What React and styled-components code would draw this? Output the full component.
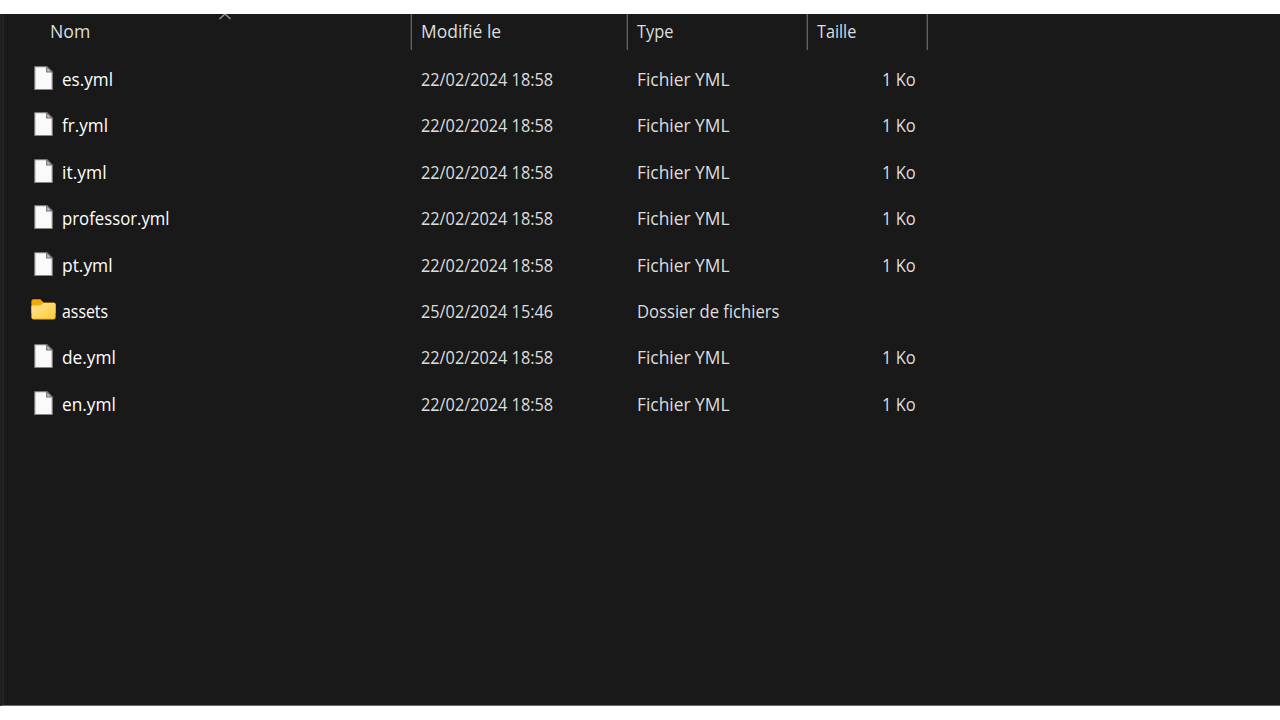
import React from 'react';
import styled, { createGlobalStyle } from 'styled-components';

const GlobalStyle = createGlobalStyle`
  * { box-sizing: border-box; }
  body { margin: 0; background: #fff; overflow: hidden; }
`;

const Page = styled.main`
  width: 1280px;
  height: 720px;
  padding: 14px 0;
  background: #fff;
`;

const Explorer = styled.section`
  position: relative;
  height: 692px;
  background: #191919;
  border-left: 3px solid #202020;
  border-bottom: 1px solid #6b696a;
  box-shadow: inset 1px 0 #272727;
  font-family: 'Open Sans', 'Noto Sans', sans-serif;
  font-size: 18px;
  line-height: 24px;
  color: #dedede;
  white-space: nowrap;
`;

const Columns = styled.div`
  display: grid;
  grid-template-columns: 409px 216px 180px 120px;
`;

const Header = styled(Columns)`
  height: 36px;
`;

const HeaderCell = styled.div`
  position: relative;
  padding: 5px 0 0 ${(p) => p.$indent || 9}px;
  border-right: 1px solid #636363;
  box-shadow: inset -1px 0 #303030;
`;

const SortArrow = styled.svg`
  position: absolute;
  left: 215px;
  top: 0;
`;

const Rows = styled.div`
  padding-top: 5.7px;
`;

const Row = styled(Columns)`
  height: 46.43px;
  align-items: center;
`;

const NameCell = styled.div`
  display: flex;
  align-items: center;
  padding-left: 28px;
  color: #fff;
`;

const IconBox = styled.span`
  display: flex;
  width: 31px;
  height: 26px;
`;

const Cell = styled.div`
  padding-left: 9px;
`;

const SizeCell = styled.div`
  display: flex;
  justify-content: flex-end;
  padding-right: 12px;
`;

const Label = styled.span`
  display: inline-block;
  transform: scaleX(${(p) => p.$stretch || 1});
  transform-origin: ${(p) => (p.$end ? 'right' : 'left')};
`;

const FileIcon = () => (
  <svg width="26" height="26" viewBox="0 0 26 26">
    <path d="M3.8 .7H16L21.2 5.9V23.5H3.8Z" fill="#fafafa" stroke="#858585" strokeWidth="1.1" />
    <path d="M15.7 .7V6H21.2Z" fill="#c4c4c4" stroke="#6e6e6e" strokeWidth="1.1" />
  </svg>
);

const FolderIcon = () => (
  <svg width="26" height="26" viewBox="0 0 26 26">
    <defs>
      <linearGradient id="folder" x1="0" y1="0" x2="1" y2="1">
        <stop offset="0" stopColor="#ffe596" />
        <stop offset="1" stopColor="#ffc937" />
      </linearGradient>
    </defs>
    <path d="M.4 3.2Q.4 1.3 2.3 1.3H9.3L12.5 4.4H22.6Q24.6 4.4 24.6 6.4V15H.4Z" fill="#f2aa0b" />
    <path d="M.4 8.6Q.4 7.4 2 7.4H9.5L12.5 5H22.9Q24.6 5 24.6 6.7V19.3Q24.6 21.3 22.6 21.3H2.4Q.4 21.3 .4 19.3Z" fill="url(#folder)" />
    <path d="M.9 20Q1.3 21 2.6 21H22.4Q23.7 21 24.1 20" fill="none" stroke="#e3a31c" strokeWidth=".7" />
  </svg>
);

const files = [
  { name: 'es.yml', stretch: 0.95, date: '22/02/2024 18:58' },
  { name: 'fr.yml', stretch: 0.95, date: '22/02/2024 18:58' },
  { name: 'it.yml', stretch: 0.97, date: '22/02/2024 18:58' },
  { name: 'professor.yml', stretch: 0.93, date: '22/02/2024 18:58' },
  { name: 'pt.yml', stretch: 0.965, date: '22/02/2024 18:58' },
  { name: 'assets', stretch: 0.882, date: '25/02/2024 15:46', folder: true },
  { name: 'de.yml', stretch: 0.96, date: '22/02/2024 18:58' },
  { name: 'en.yml', stretch: 0.96, date: '22/02/2024 18:58' },
];

export default function App() {
  return (
    <Page>
      <GlobalStyle />
      <Explorer>
        <Header>
          <HeaderCell $indent={46.5}>
            <Label $stretch={0.98}>Nom</Label>
            <SortArrow width="14" height="6" viewBox="0 0 14 6">
              <path d="M1.5 5L7 0L12.5 5" fill="none" stroke="#9a9a9a" strokeWidth="1.4" />
            </SortArrow>
          </HeaderCell>
          <HeaderCell><Label $stretch={0.97}>Modifié le</Label></HeaderCell>
          <HeaderCell><Label $stretch={0.91}>Type</Label></HeaderCell>
          <HeaderCell><Label $stretch={0.9}>Taille</Label></HeaderCell>
        </Header>
        <Rows>
          {files.map((f) => (
            <Row key={f.name}>
              <NameCell>
                <IconBox>{f.folder ? <FolderIcon /> : <FileIcon />}</IconBox>
                <Label $stretch={f.stretch}>{f.name}</Label>
              </NameCell>
              <Cell><Label $stretch={0.904}>{f.date}</Label></Cell>
              <Cell>
                <Label $stretch={f.folder ? 0.923 : 0.965}>
                  {f.folder ? 'Dossier de fichiers' : 'Fichier YML'}
                </Label>
              </Cell>
              <SizeCell>{!f.folder && <Label $end $stretch={0.92}>1 Ko</Label>}</SizeCell>
            </Row>
          ))}
        </Rows>
      </Explorer>
    </Page>
  );
}
